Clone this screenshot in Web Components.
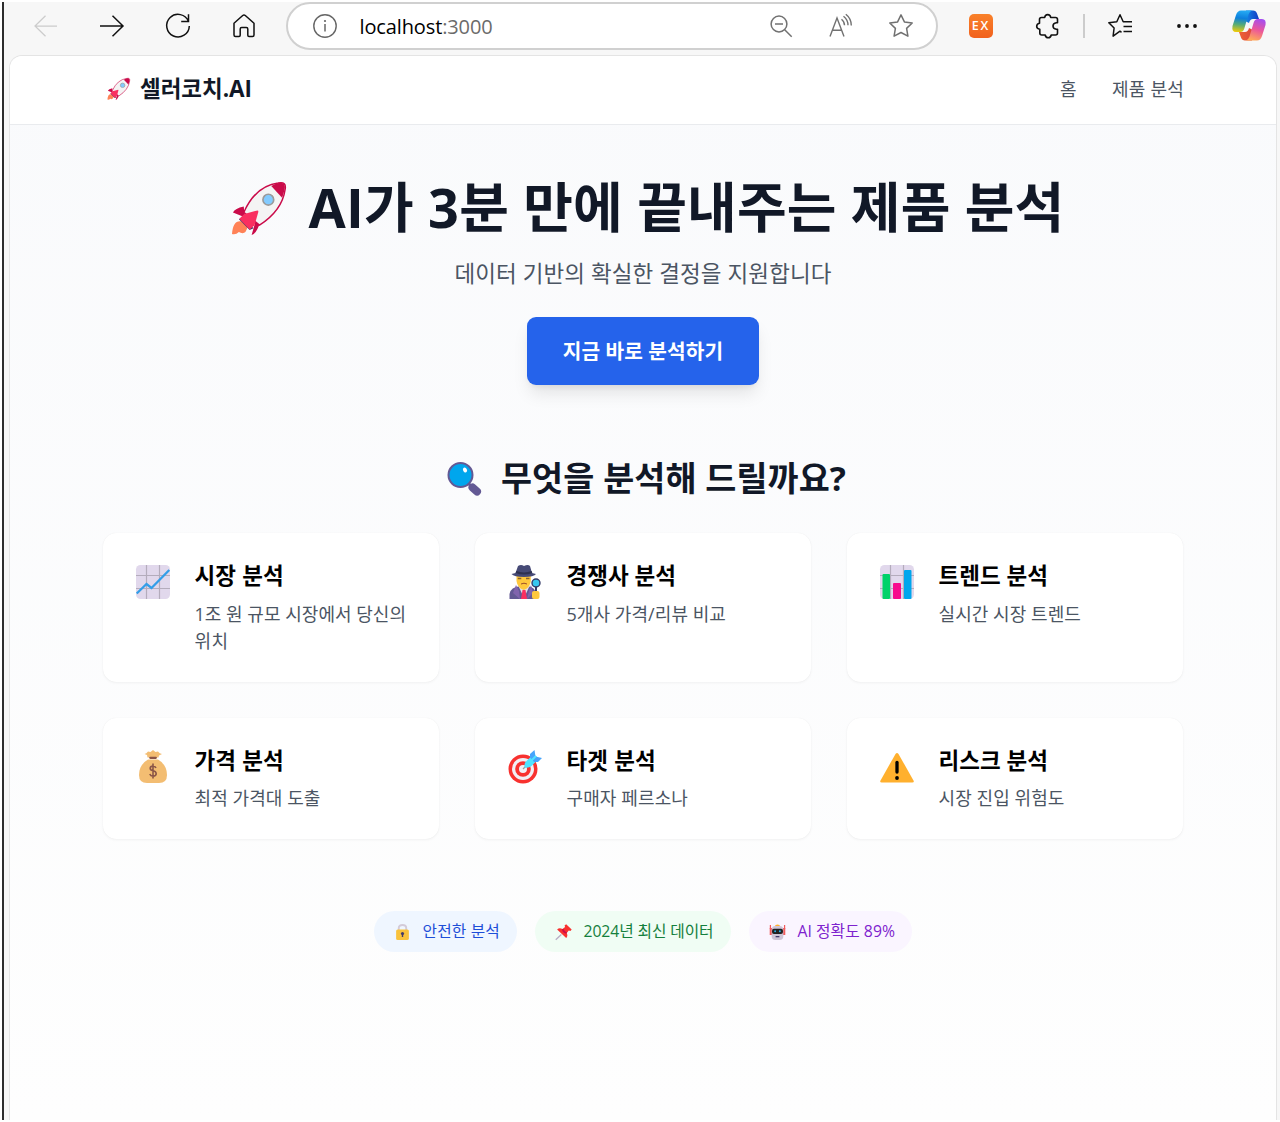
<!DOCTYPE html>
<html lang="ko">
<head>
<meta charset="utf-8">
<title>셀러코치.AI</title>
<style>
html,body{margin:0;height:100%;background:#fff;overflow:hidden}
body{font-family:"Open Sans","Noto Sans CJK KR",sans-serif;color:#111827}
</style>
</head>
<body>
<app-window></app-window>
<script>
const define=(name,html,after)=>customElements.define(name,class extends HTMLElement{
  connectedCallback(){
    if(this.shadowRoot)return;
    const t=document.createElement('template');
    t.innerHTML=typeof html==='function'?html(this):html;
    this.attachShadow({mode:'open'}).append(t.content.cloneNode(true));
    if(after)after(this);
  }
});

const ICONS={
back:['0 0 24 24','<path d="M23 12H1M11.500 1.700L1 12l10.500 10.300" fill="none" stroke="#ccc" stroke-width="1.250"/>'],
forward:['0 0 24 24','<path d="M0 12h23M12.500 1.700L23 12 12.500 22.300" fill="none" stroke="#111" stroke-width="1.500"/>'],
reload:['0 0 24 24','<path d="M22.500 7.500A11.300 11.300 0 1 0 23.300 12M22.500 .300v7.200h-7.300" fill="none" stroke="#111" stroke-width="1.500"/>'],
home:['0 0 24 24','<path d="M2 9.300L10.700 1.500q1.300-1.100 2.600 0L22 9.300V21q0 1.500-1.500 1.500H17q-1.200 0-1.200-1.200V15q0-1.500-1.500-1.500H9.700q-1.500 0-1.500 1.500v6.300q0 1.200-1.200 1.200H3.500Q2 22.500 2 21z" fill="none" stroke="#111" stroke-width="1.500" stroke-linejoin="round"/>'],
info:['0 0 24 24','<circle cx="12" cy="12" r="11.200" fill="none" stroke="#666" stroke-width="1.400"/><path d="M12 10v7.500" stroke="#666" stroke-width="1.500"/><circle cx="12" cy="7" r="1.100" fill="#666"/>'],
zoomout:['0 0 24 24','<g fill="none" stroke="#717171" stroke-width="1.500"><circle cx="10" cy="10" r="7.900"/><path d="M15.700 15.700l7 7M6 10h8"/></g>'],
read:['0 0 24 24','<g fill="none" stroke="#717171" stroke-width="1.400"><path d="M1 22.500L8 4l7 18.500M3.600 16.300h8.800M12.500 5.200q3 2.400 3 6M14.500 2.200q4.500 3.500 4.500 9M16.800 .200q5.500 4.200 5.500 11.200"/></g>'],
star:['0 0 24 24','<path d="M12 .900l3.400 7 7.800 1.100-5.600 5.400 1.300 7.800-6.900-3.700-6.900 3.700 1.300-7.800L.800 9l7.800-1.100z" fill="none" stroke="#717171" stroke-width="1.500" stroke-linejoin="round"/>'],
puzzle:['0 0 24 24','<path d="M5.500 3.500h3.200q.4-2.900 3-2.900t3 2.900h4.800q2 0 2 2v3.300h-1.200q-3.300.400-3.300 3.200t3.300 3.200h1.200v3.800q0 2-2 2h-4.300q-.5 2.800-3 2.800t-3-2.800H5.800q-2 0-2-2v-3.800Q.700 14.900.700 12.300T3.500 9.200V5.500q0-2 2-2z" fill="none" stroke="#111" stroke-width="1.600" stroke-linejoin="round"/>'],
collections:['0 0 25 24','<path d="M13.500 18.300L12 17.200l-6.900 4.900 1-8.100L.800 8.700l8-1L12 .800l3.200 6.900H24M15.500 12.500H24M15.500 17.500H24" fill="none" stroke="#111" stroke-width="1.500" stroke-linejoin="round"/>'],
dots:['0 0 20 4','<g fill="#111"><circle cx="2" cy="2" r="1.900"/><circle cx="10" cy="2" r="1.900"/><circle cx="18" cy="2" r="1.900"/></g>'],
copilot:['0 0 34 31','<defs><linearGradient id="a" x1=".4" y1="0" x2=".3" y2="1"><stop stop-color="#25aaf3"/><stop offset=".35" stop-color="#0d7fdc"/><stop offset=".65" stop-color="#55ab78"/><stop offset="1" stop-color="#f0cb08"/></linearGradient><linearGradient id="b" x1=".7" y1="0" x2=".4" y2="1"><stop stop-color="#a54df0"/><stop offset=".5" stop-color="#ec579a"/><stop offset="1" stop-color="#ffaa57"/></linearGradient><linearGradient id="c"><stop stop-color="#148be8"/><stop offset="1" stop-color="#1439c3"/></linearGradient><linearGradient id="d"><stop stop-color="#ee6332"/><stop offset="1" stop-color="#dc473c"/></linearGradient></defs><path d="M14 .500h7q3 0 4 3l2 5.500h-6q-3 0-4 4l-4-2z" fill="url(#c)"/><path d="M20 30.500h-7q-3 0-4-3L7 22h6q3 0 4-4l4 2z" fill="url(#d)"/><path d="M9 .500h11q-2.500 1-3.500 4l-4.200 14q-1 3.500-4 3.500H4Q-.500 22 .500 16L4 5Q5.500.500 9 .500z" fill="url(#a)"/><path d="M25 30.500H14q2.500-1 3.500-4l4.200-14q1-3.500 4-3.500H30q4.500 0 3.500 6L30 26q-1.500 4.500-5 4.500z" fill="url(#b)"/>'],
rocket:['0 0 56 54','<path d="M14 36L2 31q2-4 11-6zM25 40l-4 14q5-1 9-14z" fill="#ca0b4a"/><path d="M10 40Q2 39 1 53q4 1 7-2 7 4 9-6z" fill="#ff8257"/><path d="M13 31Q25 4 48 1q9-2 7 7-3 21-26 36z" fill="#f4f4f4" stroke="#ca0b4a" stroke-width="1.500"/><path d="M41 4q16-8 13.500 4Q53 14 52 16z" fill="#ca0b4a"/><path d="M8 38l4-2 11 11-4 2z" fill="#533566"/><path d="M8.500 37.500l5-5L27 29q1 0 .8 1.500L24 44l-5 4.500z" fill="#f92f60"/><circle cx="38" cy="18" r="5.500" fill="#83cbff" stroke="#9b9b9b" stroke-width="1.700"/>'],
search:['0 0 34 34','<path d="M21.500 21.500l4 4" stroke="#635994" stroke-width="3"/><path d="M25.500 25.500l4.500 4" stroke="#635994" stroke-width="8" stroke-linecap="round"/><circle cx="13.500" cy="13" r="12" fill="#00a6ed" stroke="#635994" stroke-width="2"/><ellipse cx="18" cy="8" rx="1.900" ry="2.600" fill="#fff" transform="rotate(-28 18 8)"/>'],
chart:['0 0 34 34','<rect width="34" height="34" rx="4.500" fill="#e1d8ec"/><path d="M10.500 0v34M23.500 0v34M0 10.500h34M0 23.500h34" stroke="#b4acbc" stroke-width="1.200"/><path d="M.700 28.500L10.500 19l5 4L33.300 5" stroke="#349ee8" stroke-width="2.300" fill="none"/>'],
bars:['0 0 34 34','<rect width="34" height="34" rx="4.500" fill="#e1d8ec"/><path d="M10.500 0v34M23.500 0v34M0 10.500h34M0 23.500h34" stroke="#b4acbc" stroke-width="1.200"/><rect x="2.500" y="9" width="7.500" height="25" rx="1" fill="#00d26a"/><rect x="13" y="18" width="8" height="16" rx="1" fill="#f70a8d"/><rect x="24" y="5" width="7.500" height="29" rx="1" fill="#00a6ed"/>'],
detective:['0 0 34 34','<path d="M1.500 34v-5q1-7 11-8h7q8 1 9 9v4z" fill="#635994"/><path d="M10 20h12l-6 13z" fill="#e4e1ea"/><path d="M14.500 25h3l1.500 9h-6z" fill="#f92f60"/><path d="M8 20l-3 8 7 6-1-8zM23 20l2 8-6 6 2-8z" fill="#8064ad"/><path d="M8.500 10v6q1 7 7.300 9 6-2 7-9v-6z" fill="#ffc83d"/><path d="M9.800 13.500h3.500M18 13.500h3.500" stroke="#8a6230" stroke-width="1.500"/><path d="M13 19q3-1.600 6 0" fill="none" stroke="#9b4d28"/><path d="M7.500 8L10 1q3-2 6 0 4-2 6 0l2 7 4 1q-2 3-12 3T3.500 9z" fill="#464a76"/><path d="M8 7q8 3 16 0" stroke="#2e3150" stroke-width="2" fill="none"/><path d="M28 21v6" stroke="#353b68" stroke-width="2"/><rect x="24" y="26" width="7.500" height="8" rx="2" fill="#ffc83d"/><circle cx="28" cy="18" r="4" fill="#38c8ef" stroke="#353b68" stroke-width="1.400"/>'],
money:['0 0 34 34','<path d="M11.500 7.500L11 5 8.500 4q2-.500 3.500-2.500L14.500 2 17 0l2.500 2L22 1.500Q23.500 3.500 26 4l-3 1.500-.500 2z" fill="#f3bd72"/><path d="M12 9.500h10Q31 15 31 25q0 8-8 8H11q-8 0-8-8 0-10 9-15.500z" fill="#f3bd72"/><path d="M14.300 7.800h5.500" stroke="#8b5547" stroke-width="2.300" stroke-linecap="round"/><path d="M20 18q-.8-2-3-2-2.800 0-2.800 2.300 0 2 2.800 2.500 3.200.700 3.200 3 0 2.300-3.200 2.300-2.500 0-3.200-2.100M17 13.500v15" fill="none" stroke="#8b5547" stroke-width="1.600"/>'],
target:['0 0 34 34','<circle cx="15" cy="19" r="14.500" fill="#f8312f"/><circle cx="15" cy="19" r="11" fill="#f2eff5"/><circle cx="15" cy="19" r="7.800" fill="#f8312f"/><circle cx="15" cy="19" r="4" fill="#f2eff5"/><path d="M15 19l6-6" stroke="#9b9b9b" stroke-width="1.300"/><path d="M16.500 17.500q-.500-4.500 2-6.500l5-5h5v5l-5 5q-3 2.500-7 1.500z" fill="#50e2ff"/><path d="M22 7.500V4l4.500-4 1 6.500L34 8l-4 4h-4l-2-2.500z" fill="#46a4fb"/><path d="M23 11l5-5" stroke="#50e2ff" stroke-width="2"/>'],
warning:['0 0 34 34','<path d="M15.500 3.500q1.500-2 3 0L33.500 30q1 2-1.200 2H1.700Q-.500 32 .500 30z" fill="#ffb02e" transform="translate(0 .500)"/><path d="M17 12.500v9.500" stroke="#000" stroke-width="3.300" stroke-linecap="round"/><circle cx="17" cy="28" r="1.900"/>'],
lock:['0 0 16 16','<path d="M4.500 7V4q0-3 3.500-3t3.500 3v3" fill="none" stroke="#d3cbd9" stroke-width="1.800"/><rect x="2" y="5.500" width="12" height="10.500" rx="1.500" fill="#f9c23c"/><path d="M8 9.500v3.500" stroke="#433b6b" stroke-width="1.300"/><circle cx="8" cy="9.500" r="1.500" fill="#433b6b"/>'],
pin:['0 0 16 16','<path d="M6 10.500L.700 15.700" stroke="#b8adc5" stroke-width="1.200"/><path d="M2 5.500q2-2 5-.5L9.500 3 9 1.500 10.500.300 15.700 5.500 14.500 7 13 6.500 11 9q1.500 3-.5 5z" fill="#f8312f"/><path d="M8 5q1 3 3.500 3.700l-1 1Q7 9 6.500 5.300z" fill="#ca0b4a"/>'],
robot:['0 0 18 16','<path d="M2 4v7M16 4v7" stroke="#f15b5b" stroke-width="2.500"/><path d="M1.500 1v4M16.500 1v4" stroke="#f15b5b" stroke-width="1.300"/><path d="M6 2.500Q6.500.500 9 .500t3 2z" fill="#ffb02e"/><rect x="2.800" y="2" width="12.400" height="14" rx="4" fill="#cdc4d6"/><rect x="3.200" y="4.800" width="11.600" height="5.200" rx="2" fill="#212121"/><circle cx="6.500" cy="7.300" r="1" fill="#26b4ed"/><circle cx="11.500" cy="7.300" r="1" fill="#26b4ed"/><rect x="7" y="12" width="4" height="1.300" fill="#433b6b"/>']
};
define('ui-icon',el=>{
  const [vb,art]=ICONS[el.getAttribute('name')];
  return `<style>:host{display:block;flex:none}svg{display:block;width:100%;height:100%;overflow:visible}</style><svg viewBox="${vb}" preserveAspectRatio="none">${art}</svg>`;
});

/* Single line of text tracked so that it spans the width given in pixels. */
define('fit-text','<style>:host{display:inline-block;white-space:nowrap;flex:none}</style><slot></slot>',el=>{
  requestAnimationFrame(()=>{
    const n=el.textContent.length;
    el.style.letterSpacing=((+el.getAttribute('width')-el.getBoundingClientRect().width)/n).toFixed(3)+'px';
  });
});

define('browser-bar',`<style>
:host{display:flex;height:53px;background:#f7f7f7;align-items:flex-start;box-sizing:border-box}
.nav{display:flex;gap:42px;padding:12px 0 0 30px;width:282px;box-sizing:border-box}
.nav ui-icon,.i{width:24px;height:24px}
.url{display:flex;align-items:center;width:652px;height:48px;box-sizing:border-box;border:2px solid #d0d0d0;border-radius:24px;background:#fff;padding:0 23px 0 25px;font-size:20px;color:#000}
.url fit-text{margin-left:22.500px}.url span{color:#6b6b6b}
.sp{flex:1}
.right{display:flex;align-items:center;height:47px;flex:1}
.ex{width:24px;height:24px;border-radius:5px;background:linear-gradient(#f9812a,#f1611d);color:#fff;font:600 12.500px/24px "Open Sans";text-align:center;margin-left:31px}
.sep{width:2px;height:24px;background:#ccc}
</style>
<div class="nav"><ui-icon name="back"></ui-icon><ui-icon name="forward"></ui-icon><ui-icon name="reload"></ui-icon><ui-icon name="home"></ui-icon></div>
<div class="url"><ui-icon class="i" name="info"></ui-icon><fit-text width="133">localhost<span>:3000</span></fit-text><div class="sp"></div><ui-icon class="i" name="zoomout"></ui-icon><ui-icon class="i" name="read" style="margin:0 36px"></ui-icon><ui-icon class="i" name="star"></ui-icon></div>
<div class="right"><div class="ex"><fit-text width="18.500">EX</fit-text></div><ui-icon class="i" name="puzzle" style="margin-left:43px"></ui-icon><div class="sep" style="margin-left:23px"></div><ui-icon name="collections" style="width:25px;height:24px;margin-left:23px"></ui-icon><ui-icon name="dots" style="width:20px;height:4px;margin-left:44px"></ui-icon><ui-icon name="copilot" style="width:34px;height:31px;margin-left:35px"></ui-icon></div>`);

define('site-header',`<style>
:host{display:flex;align-items:center;height:69px;box-sizing:border-box;border-bottom:1px solid #e9ebee;background:#fff;padding:0 92px 2px 97px;line-height:32px}
.brand{font-size:22.500px;font-weight:700;margin-left:10px}
nav{display:flex;gap:35px;margin-left:auto;font-size:18px;color:#4b5563;padding-bottom:1px}
</style><ui-icon name="rocket" style="width:23px;height:22px"></ui-icon><fit-text class="brand" width="112">셀러코치.AI</fit-text><nav><fit-text width="17">홈</fit-text><fit-text width="72">제품 분석</fit-text></nav>`);

define('hero-section',`<style>
:host{display:flex;flex-direction:column;align-items:center;padding-top:52px}
h1{display:flex;align-items:center;gap:23px;height:60px;margin:0 0 0 9px;font-size:54px;line-height:60px;font-weight:700}
h1 ui-icon{width:55px;height:53px;margin-top:3px}
p{margin:21px 0 27px;height:32px;font-size:22.500px;line-height:32px;color:#4b5563}
button{width:232px;height:68px;border:0;border-radius:9px;background:#2563eb;color:#fff;font:700 20.250px/32px "Open Sans","Noto Sans CJK KR",sans-serif;box-shadow:0 11px 17px -3px #0000001a,0 4px 7px -4px #0000001a}
</style><h1><ui-icon name="rocket"></ui-icon><fit-text width="756">AI가 3분 만에 끝내주는 제품 분석</fit-text></h1>
<p><fit-text width="377">데이터 기반의 확실한 결정을 지원합니다</fit-text></p><button><fit-text width="160.500">지금 바로 분석하기</fit-text></button>`);

define('feature-card',el=>`<style>
:host{display:flex;gap:18px;box-sizing:border-box;padding:27px;border-radius:13.500px;background:#fff;box-shadow:0 1px 3px #0000000c,0 0 1px #00000010}
ui-icon{width:34px;height:34px;margin:5px 6.500px 0 6px}
h3{margin:0 0 9.500px;font-size:22.500px;line-height:31px;font-weight:700;color:#000}
.d{font-size:18px;line-height:27px;color:#4b5563}
</style><ui-icon name="${el.getAttribute('icon')}"></ui-icon><div><h3><slot name="title"></slot></h3><div class="d"><slot></slot></div></div>`);

define('feature-section',`<style>
:host{display:block;padding-top:73px}
h2{display:flex;justify-content:center;align-items:center;gap:20px;height:40px;margin:0 0 35px 7px;font-size:33.750px;line-height:40px;font-weight:700}
h2 ui-icon{width:34px;height:34px;margin-top:2px}
.grid{display:grid;grid-template-columns:repeat(3,336px);grid-template-rows:148.500px 121px;gap:36px;justify-content:center}
</style><h2><ui-icon name="search"></ui-icon><fit-text width="345">무엇을 분석해 드릴까요?</fit-text></h2>
<div class="grid">
<feature-card icon="chart"><fit-text slot="title" width="89.500">시장 분석</fit-text><fit-text width="211.500">1조 원 규모 시장에서 당신의</fit-text><br><fit-text width="34">위치</fit-text></feature-card>
<feature-card icon="detective"><fit-text slot="title" width="109.500">경쟁사 분석</fit-text><fit-text width="159.500">5개사 가격/리뷰 비교</fit-text></feature-card>
<feature-card icon="bars"><fit-text slot="title" width="109.500">트렌드 분석</fit-text><fit-text width="142.500">실시간 시장 트렌드</fit-text></feature-card>
<feature-card icon="money"><fit-text slot="title" width="89.500">가격 분석</fit-text><fit-text width="126">최적 가격대 도출</fit-text></feature-card>
<feature-card icon="target"><fit-text slot="title" width="89.500">타겟 분석</fit-text><fit-text width="121.500">구매자 페르소나</fit-text></feature-card>
<feature-card icon="warning"><fit-text slot="title" width="109.500">리스크 분석</fit-text><fit-text width="126">시장 진입 위험도</fit-text></feature-card>
</div>`);

define('trust-pill',el=>`<style>
:host{display:flex;align-items:center;box-sizing:border-box;height:41px;border-radius:20.500px;padding-left:20px;font-size:15.750px;line-height:23px}
ui-icon{width:17px;height:16px;margin-right:11.500px}
</style><ui-icon name="${el.getAttribute('icon')}"></ui-icon><slot></slot>`);

define('trust-row',`<style>
:host{display:flex;justify-content:center;gap:18px;padding-top:72.500px}
</style><trust-pill icon="lock" style="width:143px;background:#eff6ff;color:#1d4ed8"><fit-text width="77.500">안전한 분석</fit-text></trust-pill>
<trust-pill icon="pin" style="width:196px;background:#f0fdf4;color:#15803d"><fit-text width="130">2024년 최신 데이터</fit-text></trust-pill>
<trust-pill icon="robot" style="width:163px;background:#faf5ff;color:#7e22ce"><fit-text width="97.500">AI 정확도 89%</fit-text></trust-pill>`);

define('app-window',`<style>
:host{display:block;box-sizing:border-box;height:1122px;padding:2px 0 2px 2px;background:#fff}
.frame{height:100%;box-sizing:border-box;border-left:2px solid #2d2d2d;background:#f7f7f7;display:flex;flex-direction:column}
.page{flex:1;margin:0 3px 0 5px;border:1px solid #e4e4e4;border-bottom:0;border-radius:13px 13px 0 0;overflow:hidden;background:linear-gradient(#f9fafc,#fefefe)}
</style><div class="frame"><browser-bar></browser-bar><div class="page"><site-header></site-header><hero-section></hero-section><feature-section></feature-section><trust-row></trust-row></div></div>`);
</script>
</body>
</html>
